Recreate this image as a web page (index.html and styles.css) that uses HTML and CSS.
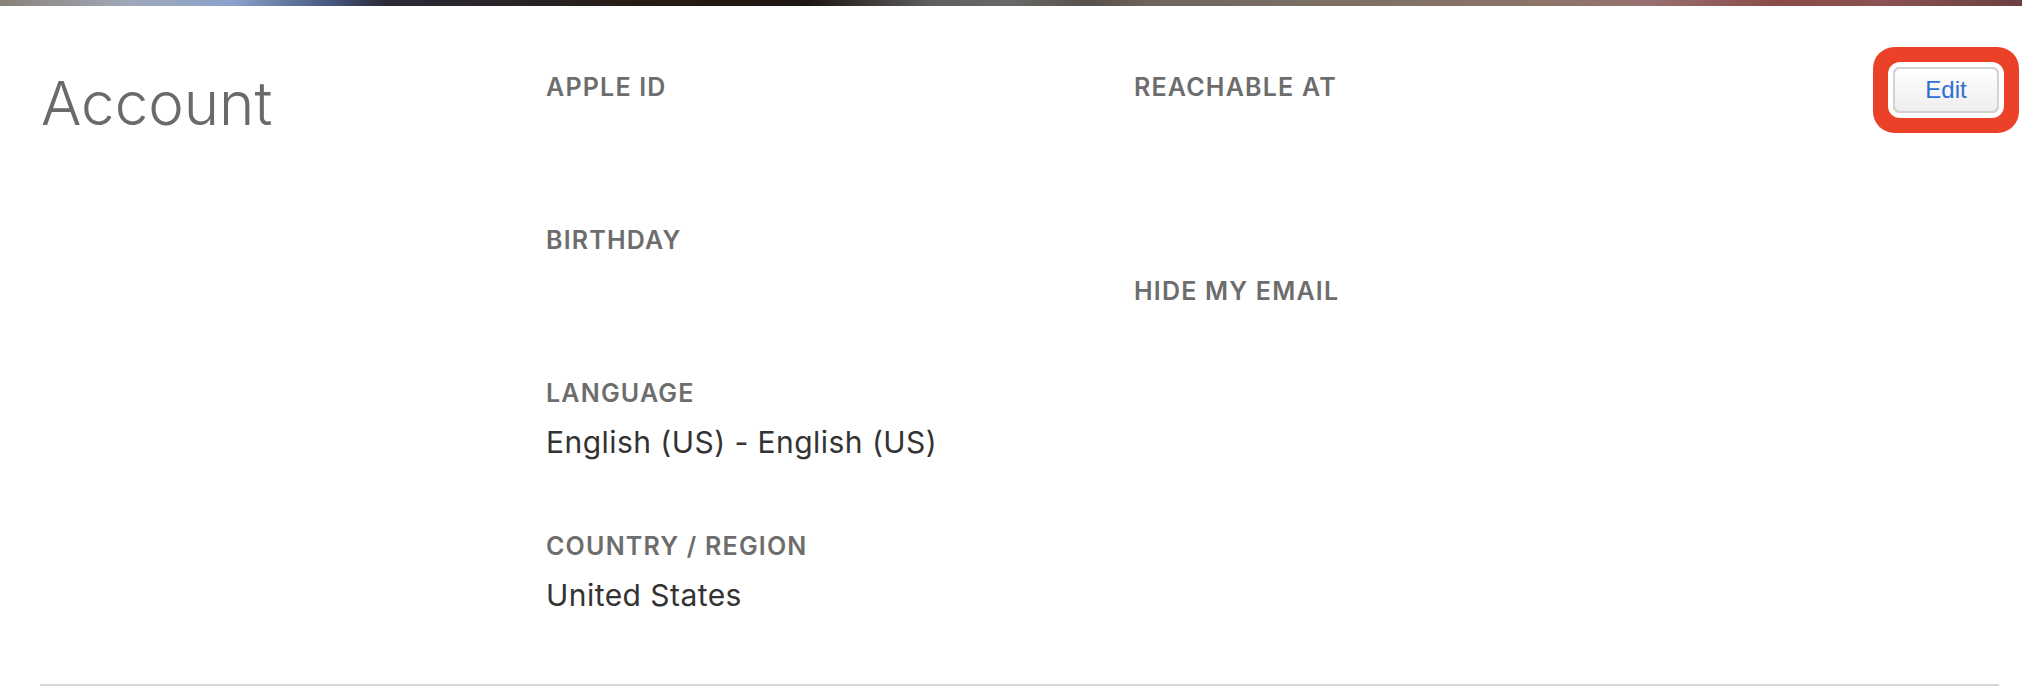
FILE: index.html
```html
<!DOCTYPE html>
<html>
<head>
  <title>Account</title>
  <meta name="viewport" content="width=device-width, initial-scale=1">
  <link rel="stylesheet" href="styles.css">
</head>
<body>
  <div class="topbar"></div>

  <section class="account">
    <h1 class="title">Account</h1>

    <div class="col">
      <div class="field">
        <div class="label">APPLE ID</div>
        <div class="value"></div>
      </div>
      <div class="field">
        <div class="label">BIRTHDAY</div>
        <div class="value"></div>
      </div>
      <div class="field">
        <div class="label">LANGUAGE</div>
        <div class="value">English (US) - English (US)</div>
      </div>
      <div class="field">
        <div class="label">COUNTRY / REGION</div>
        <div class="value">United States</div>
      </div>
    </div>

    <div class="col">
      <div class="field tall">
        <div class="label">REACHABLE AT</div>
        <div class="value"></div>
      </div>
      <div class="field">
        <div class="label">HIDE MY EMAIL</div>
        <div class="value"></div>
      </div>
    </div>

    <div class="actions">
      <button class="button highlight">Edit</button>
    </div>
  </section>
</body>
</html>
```

FILE: styles.css
```css
body { margin: 0; padding: 0; background: #fff; font-family: Inter, "Noto Sans", Arial, sans-serif; }
.topbar { height: 6px; background: linear-gradient(to right, #8a8279 0%, #a0a8b8 6.4%, #8aa2cc 11.5%, #44557a 16.5%, #2c2a38 19%, #261c14 32%, #1e1612 40%, #5e5e5e 46%, #686866 50%, #58504a 54%, #6e645e 57%, #7a6e64 64%, #8c7468 76.5%, #987070 81.6%, #8a4a48 88%, #8a5252 93%, #6a4040 100%); }
.account { display: grid; grid-template-columns: 506px 588px 1fr auto; margin: 0 23px 0 40px; padding-top: 66px; border-bottom: 2px solid #d6d6d6; }
.title { margin: 1px 0 0 1px; font-size: 60px; line-height: 60px; font-weight: 300; color: #6a6a6a; }
.field { height: 153px; }
.field.tall { height: 204px; }
.label { font-size: 25px; line-height: 30px; font-weight: 600; letter-spacing: 1.2px; color: #6d6d6d; margin-bottom: 16px; }
.value { font-size: 30px; line-height: 36px; letter-spacing: 0.45px; color: #333; }
.actions { align-self: start; margin-top: -5px; }
.button { display: block; width: 106px; height: 46px; border: 2px solid #d2d2d2; border-radius: 7px; background: linear-gradient(#ffffff, #eeeeee); color: #2f6fd0; font-family: "Liberation Sans", Arial, sans-serif; font-size: 24px; padding: 0; cursor: pointer; }
.highlight { box-shadow: 0 0 0 5px #fff, 0 0 0 20px #ea4128; }
```
